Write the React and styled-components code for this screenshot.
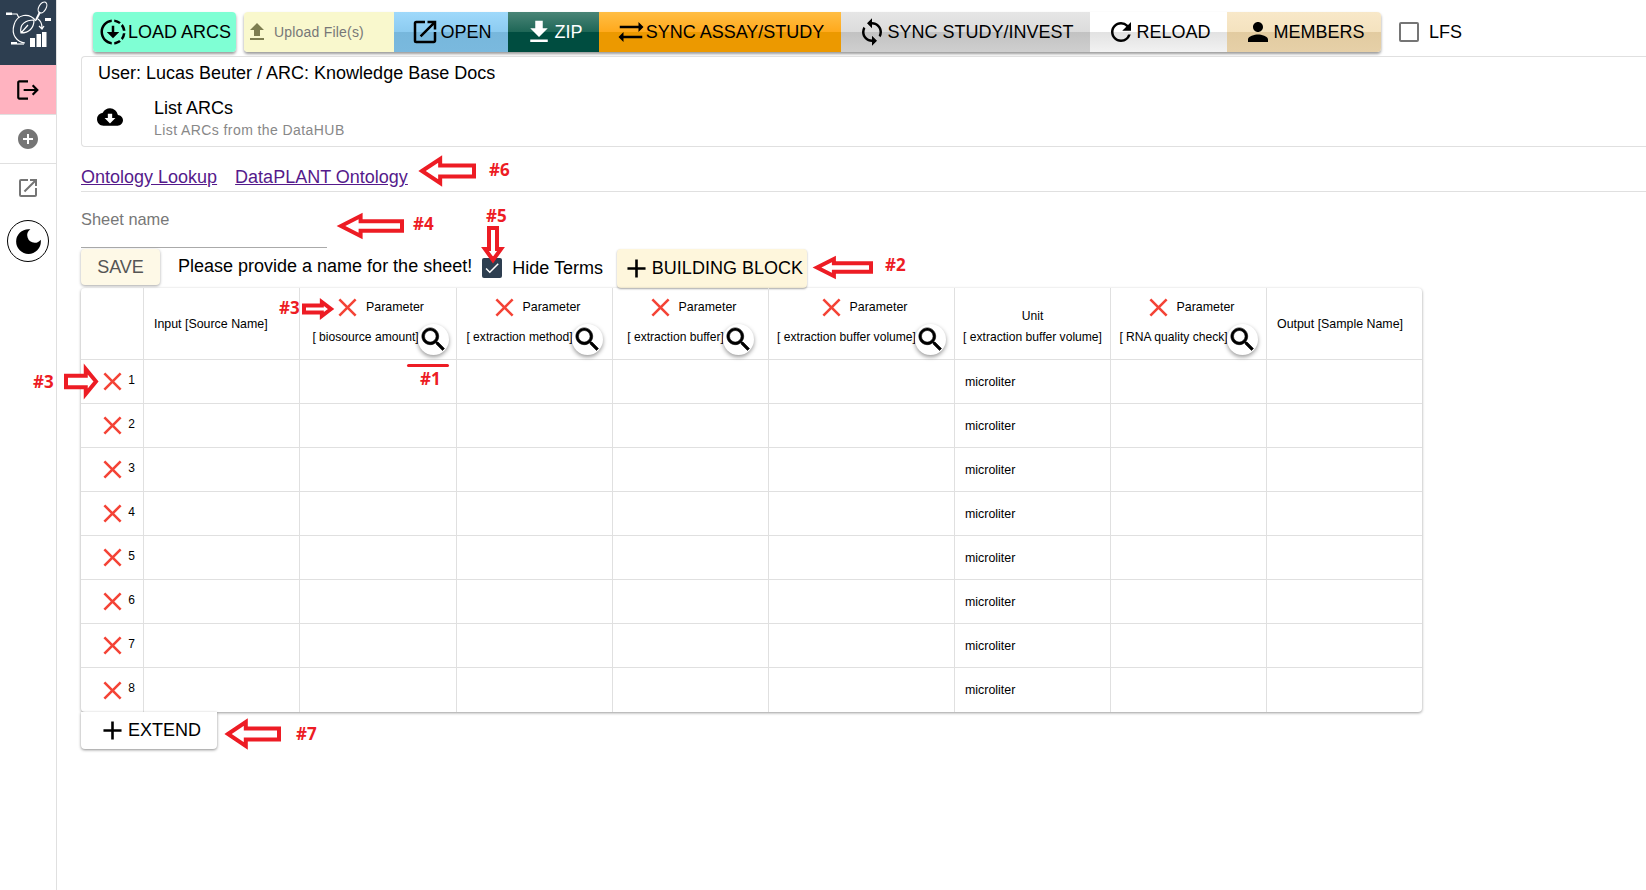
import React from "react";
import styled, { createGlobalStyle } from "styled-components";
import {
  MdAdd,
  MdAddCircle,
  MdCheck,
  MdClose,
  MdCloudDownload,
  MdDarkMode,
  MdDownloading,
  MdFileDownload,
  MdFileUpload,
  MdLogout,
  MdOpenInNew,
  MdPerson,
  MdRefresh,
  MdSync,
  MdSyncAlt,
} from "react-icons/md";

const GlobalStyle = createGlobalStyle`
  html, body {
    margin: 0;
    padding: 0;
    background: #fff;
    overflow: hidden;
  }
  body {
    font-family: "Liberation Sans", Arial, sans-serif;
    color: #000;
  }
`;

// --- page frame ---

const Page = styled.div`
  position: relative;
  display: flex;
  width: 1646px;
  height: 890px;
  overflow: hidden;
`;

const Sidebar = styled.aside`
  width: 56px;
  flex: none;
  border-right: 1px solid #e0e0e0;
  display: flex;
  flex-direction: column;
`;

const LogoBox = styled.div`
  height: 65px;
  background: #2d3e50;
`;

const SideItem = styled.div`
  height: ${(p) => p.$h}px;
  display: flex;
  align-items: center;
  justify-content: center;
  box-sizing: border-box;
  background: ${(p) => p.$bg || "transparent"};
  border-bottom: ${(p) => (p.$line ? "1px solid #e0e0e0" : "none")};
  color: ${(p) => p.$color || "#757575"};
  font-size: ${(p) => p.$size || 24}px;
`;

const MoonRing = styled.div`
  width: 40px;
  height: 40px;
  border: 1.5px solid #000;
  border-radius: 50%;
  display: flex;
  align-items: center;
  justify-content: center;
  color: #000;
  font-size: 33px;
`;

const Main = styled.main`
  flex: 1;
  min-width: 0;
  display: flex;
  flex-direction: column;
`;

// --- toolbar ---

const Toolbar = styled.div`
  height: 56px;
  box-sizing: border-box;
  padding: 12px 0 4px 36px;
  display: flex;
  align-items: stretch;
`;

const ButtonGroup = styled.div`
  display: flex;
  border-radius: 4px;
  overflow: hidden;
  box-shadow: 0 2px 3px rgba(0, 0, 0, 0.4);
  margin-right: ${(p) => p.$mr || 0}px;
`;

const ToolButton = styled.div`
  width: ${(p) => p.$w}px;
  display: flex;
  align-items: center;
  justify-content: center;
  background: ${(p) => p.$bg};
  color: ${(p) => p.$color || "#000"};
  font-size: 18px;
  line-height: 1;
  white-space: nowrap;
  svg {
    flex: none;
    font-size: ${(p) => p.$icon || 30}px;
  }
`;

const UploadButton = styled.div`
  width: 150px;
  display: flex;
  align-items: center;
  background: #f9f8cd;
  color: #777;
  font-size: 14px;
  letter-spacing: 0.2px;
  box-sizing: border-box;
  gap: 5px;
  svg {
    font-size: 24px;
    margin-left: 1px;
    color: #7d7d50;
  }
`;

const Lfs = styled.div`
  display: flex;
  align-items: center;
  margin-left: 18px;
  font-size: 18px;
  gap: 10px;
`;

const EmptyBox = styled.span`
  width: 16px;
  height: 16px;
  border: 2px solid #757575;
  border-radius: 2px;
`;

// --- arc card ---

const ArcCard = styled.section`
  margin-left: 24px;
  height: 91px;
  box-sizing: border-box;
  border: 1px solid #e0e0e0;
  border-right: none;
  border-radius: 4px 0 0 4px;
  padding: 3px 0 0 16px;
`;

const ArcTitle = styled.div`
  font-size: 18px;
  line-height: 26px;
  margin-bottom: 10px;
`;

const ArcRow = styled.div`
  display: flex;
  align-items: center;
  svg {
    font-size: 26px;
    margin-right: 31px;
    margin-left: -1px;
    margin-top: -3px;
  }
`;

const ArcName = styled.div`
  font-size: 18px;
  line-height: 25px;
`;

const ArcHint = styled.div`
  font-size: 14px;
  line-height: 19px;
  color: #888;
  letter-spacing: 0.42px;
`;

// --- links and sheet form ---

const LinkRow = styled.nav`
  margin-left: 24px;
  height: 45px;
  box-sizing: border-box;
  border-bottom: 1px solid #e0e0e0;
  display: flex;
  align-items: flex-end;
  padding-bottom: 1px;
  gap: 18px;
`;

const OntologyLink = styled.a`
  color: #551a8b;
  font-size: 18px;
  line-height: 26px;
  text-decoration: underline;
`;

const SheetName = styled.div`
  margin-left: 24px;
  width: 246px;
  height: 56px;
  box-sizing: border-box;
  border-bottom: 1px solid #aaa;
  padding-top: 17px;
  font-size: 16.4px;
  line-height: 20px;
  color: #777;
`;

const ActionRow = styled.div`
  margin-left: 24px;
  height: 40px;
  display: flex;
  align-items: center;
`;

const SaveButton = styled.div`
  width: 79px;
  height: 36px;
  margin-top: -2px;
  display: flex;
  align-items: center;
  justify-content: center;
  background: #fef9e7;
  color: #555;
  font-size: 18px;
  border-radius: 4px;
  box-shadow: 0 1px 3px rgba(0, 0, 0, 0.35);
`;

const SheetWarning = styled.span`
  margin-left: 18px;
  margin-top: -3px;
  font-size: 18px;
`;

const CheckedBox = styled.span`
  width: 20px;
  height: 20px;
  margin-left: 10px;
  margin-top: -1px;
  border-radius: 2px;
  background: #2d3e50;
  color: #fff;
  display: flex;
  align-items: center;
  justify-content: center;
  font-size: 18px;
`;

const HideTerms = styled.span`
  margin-left: 10px;
  font-size: 18px;
`;

const BlockButton = styled.div`
  margin-left: 14px;
  width: 190px;
  height: 39px;
  display: flex;
  align-items: center;
  justify-content: center;
  background: #fef6dc;
  font-size: 18px;
  border-radius: 4px;
  box-shadow: 0 1px 2px rgba(0, 0, 0, 0.35);
  svg {
    font-size: 31px;
    flex: none;
  }
`;

// --- building block table ---

const Table = styled.div`
  margin-left: 24px;
  width: 1341px;
  display: grid;
  grid-template-columns: 63px 156px 157px 156px 156px 186px 156px 156px 155px;
  grid-template-rows: 72px;
  grid-auto-rows: 44px;
  border-radius: 4px;
  box-shadow: 0 1px 3px rgba(0, 0, 0, 0.4);
  font-size: 12.4px;
`;

const Cell = styled.div`
  box-sizing: border-box;
  border-right: ${(p) => (p.$last ? "none" : "1px solid #e0e0e0")};
  border-bottom: ${(p) => (p.$bottom ? "none" : "1px solid #e0e0e0")};
  display: flex;
  align-items: center;
  padding-left: ${(p) => p.$pl || 0}px;
`;

const ParamCell = styled(Cell)`
  flex-direction: column;
  padding-top: 4px;
  white-space: nowrap;
`;

const UnitCell = styled(Cell)`
  flex-direction: column;
  justify-content: center;
  padding-top: 5px;
  gap: 7px;
  white-space: nowrap;
  font-size: 12.1px;
`;

const ParamTop = styled.div`
  display: flex;
  align-items: center;
  justify-content: center;
  height: 30px;
  gap: 3px;
`;

const ParamBottom = styled.div`
  display: flex;
  align-items: center;
  justify-content: center;
  height: 31px;
  margin-top: 2px;
  margin-left: ${(p) => p.$shift || 0}px;
  font-size: 12.1px;
`;

const ParamLabel = styled.span`
  margin-top: -5px;
`;

const DeleteIcon = styled(MdClose)`
  color: #f44336;
  font-size: 31px;
  flex: none;
`;

const SearchButton = styled.span`
  width: 31px;
  height: 31px;
  flex: none;
  border-radius: 50%;
  background: #fff;
  box-shadow: 0 2px 4px rgba(0, 0, 0, 0.4);
  display: flex;
  align-items: center;
  justify-content: center;
  margin-left: -1px;
`;

const RowHead = styled(Cell)`
  justify-content: flex-end;
  padding-right: 8px;
`;

const RowNumber = styled.span`
  margin-top: -4px;
  font-size: 12px;
`;

const ExtendButton = styled.div`
  margin-left: 24px;
  width: 136px;
  height: 37px;
  display: flex;
  align-items: center;
  justify-content: center;
  background: #fff;
  font-size: 18px;
  border-radius: 0 0 4px 4px;
  box-shadow: 0 1px 3px rgba(0, 0, 0, 0.45);
  svg {
    font-size: 31px;
    flex: none;
  }
`;

// --- red annotations lying over the screenshot ---

const Note = styled.span`
  position: absolute;
  left: ${(p) => p.$x}px;
  top: ${(p) => p.$y}px;
  color: #ed1c24;
  font-family: "Open Sans", sans-serif;
  font-weight: 700;
  font-size: 17px;
  line-height: 20px;
`;

const ArrowSvg = styled.svg`
  position: absolute;
  left: ${(p) => p.$x}px;
  top: ${(p) => p.$y}px;
  overflow: visible;
`;

const Underline = styled.div`
  position: absolute;
  left: 407px;
  top: 364px;
  width: 42px;
  height: 3px;
  border-radius: 2px;
  background: #ed1c24;
`;

function Arrow({ x, y, w, h, dir = "left" }) {
  // drawn pointing left in a w x h box, mirrored or turned for the other ways
  const head = Math.min(w * 0.36, h * 0.9);
  const a = h * 0.3;
  const b = h * 0.7;
  const d = `M2 ${h / 2} L${head} 2 L${head} ${a} L${w - 2} ${a} L${w - 2} ${b} L${head} ${b} L${head} ${h - 2} Z`;
  const turn =
    dir === "right"
      ? `rotate(180 ${w / 2} ${h / 2})`
      : dir === "down"
      ? `translate(${h} 0) rotate(90) translate(${w} 0) scale(-1 1)`
      : undefined;
  const box = dir === "down" ? { width: h, height: w } : { width: w, height: h };
  return (
    <ArrowSvg $x={x} $y={y} {...box}>
      <path d={d} transform={turn} fill="#fff" stroke="#ed1c24" strokeWidth="4" strokeLinejoin="miter" />
    </ArrowSvg>
  );
}

function Logo() {
  return (
    <svg width="56" height="65" viewBox="0 0 56 65" fill="none" stroke="#fff" strokeWidth="1.2">
      <path d="M36 21 C29 12 17 14 14 25 C11 35 17 42 25 43" />
      <path d="M36 20 L40 12" strokeWidth="2" />
      <ellipse cx="42.5" cy="7.5" rx="3.6" ry="6" transform="rotate(30 42.5 7.5)" />
      <path d="M21 33 C19 24 26 20 34 20 C34 28 29 33 21 33 Z M21 33 L28 25" />
      <path d="M11 14 L17 14 L19 18" />
      <path d="M17 44 L24 44" />
      <path d="M38 19 C41 21 42 24 42 28 M39 26 L42 29 L44 26" />
      <g fill="#fff" stroke="none">
        <rect x="6" y="12.5" width="6" height="2.5" />
        <rect x="11" y="42" width="6" height="2.5" />
        <rect x="45" y="18" width="6" height="3" />
        <rect x="30" y="38" width="5" height="9" />
        <rect x="36.5" y="34" width="4.5" height="13" />
        <rect x="42" y="32" width="4.5" height="15" />
      </g>
    </svg>
  );
}

// material search glyph, with a thin stroke because the reference draws it heavier
function SearchGlyph() {
  return (
    <svg width="31" height="31" viewBox="0 0 24 24" stroke="#000" strokeWidth="0.5">
      <path d="M15.5 14h-.79l-.28-.27C15.41 12.59 16 11.11 16 9.5 16 5.91 13.09 3 9.5 3S3 5.91 3 9.5 5.91 16 9.5 16c1.61 0 3.09-.59 4.23-1.57l.27.28v.79l5 4.99L20.49 19l-4.99-5zm-6 0C7.01 14 5 11.99 5 9.5S7.01 5 9.5 5 14 7.01 14 9.5 11.99 14 9.5 14z" />
    </svg>
  );
}

function ParamHeader({ name, shift }) {
  return (
    <ParamCell>
      <ParamTop>
        <DeleteIcon />
        <span>Parameter</span>
      </ParamTop>
      <ParamBottom $shift={shift}>
        <ParamLabel>[ {name}]</ParamLabel>
        <SearchButton>
          <SearchGlyph />
        </SearchButton>
      </ParamBottom>
    </ParamCell>
  );
}

const ROWS = [1, 2, 3, 4, 5, 6, 7, 8];

function App() {
  return (
    <Page>
      <GlobalStyle />
      <Sidebar>
        <LogoBox>
          <Logo />
        </LogoBox>
        <SideItem $h={50} $bg="#ffb3c0" $color="#000" $size={26} $line>
          <MdLogout />
        </SideItem>
        <SideItem $h={49} $line $size={24}>
          <MdAddCircle />
        </SideItem>
        <SideItem $h={48} $size={24}>
          <MdOpenInNew />
        </SideItem>
        <SideItem $h={58}>
          <MoonRing>
            <MdDarkMode />
          </MoonRing>
        </SideItem>
      </Sidebar>

      <Main>
        <Toolbar>
          <ButtonGroup $mr={8}>
            <ToolButton $w={143} $bg="#7fffd4">
              <MdDownloading />
              LOAD ARCS
            </ToolButton>
          </ButtonGroup>
          <ButtonGroup>
            <UploadButton>
              <MdFileUpload />
              Upload File(s)
            </UploadButton>
            <ToolButton $w={114} $bg="linear-gradient(#9fd9fb 0%, #8ccbf0 50%, #77b7dc 50%, #7ab9de 100%)">
              <MdOpenInNew />
              OPEN
            </ToolButton>
            <ToolButton $w={91} $color="#fff" $bg="linear-gradient(#4a8577 0%, #1e6656 50%, #004d40 50%, #004d40 100%)">
              <MdFileDownload />
              ZIP
            </ToolButton>
            <ToolButton $w={242} $bg="linear-gradient(#ffbe45 0%, #ffa91c 50%, #ec9900 50%, #ec9900 100%)">
              <MdSyncAlt />
              SYNC ASSAY/STUDY
            </ToolButton>
            <ToolButton $w={249} $bg="linear-gradient(#e6e6e6 0%, #dcdcdc 50%, #c2c2c2 50%, #cfcfcf 100%)">
              <MdSync />
              SYNC STUDY/INVEST
            </ToolButton>
            <ToolButton $w={137} $bg="linear-gradient(#fff 0%, #fff 50%, #e2e2e2 50%, #f2f2f2 100%)">
              <MdRefresh />
              RELOAD
            </ToolButton>
            <ToolButton $w={154} $bg="linear-gradient(#f8e8c9 0%, #f4e2bf 50%, #e2cba0 50%, #e6d0a8 100%)">
              <MdPerson />
              MEMBERS
            </ToolButton>
          </ButtonGroup>
          <Lfs>
            <EmptyBox />
            LFS
          </Lfs>
        </Toolbar>

        <ArcCard>
          <ArcTitle>User: Lucas Beuter / ARC: Knowledge Base Docs</ArcTitle>
          <ArcRow>
            <MdCloudDownload />
            <div>
              <ArcName>List ARCs</ArcName>
              <ArcHint>List ARCs from the DataHUB</ArcHint>
            </div>
          </ArcRow>
        </ArcCard>

        <LinkRow>
          <OntologyLink>Ontology Lookup</OntologyLink>
          <OntologyLink>DataPLANT Ontology</OntologyLink>
        </LinkRow>

        <SheetName>Sheet name</SheetName>

        <ActionRow>
          <SaveButton>SAVE</SaveButton>
          <SheetWarning>Please provide a name for the sheet!</SheetWarning>
          <CheckedBox>
            <MdCheck />
          </CheckedBox>
          <HideTerms>Hide Terms</HideTerms>
          <BlockButton>
            <MdAdd />
            BUILDING BLOCK
          </BlockButton>
        </ActionRow>

        <Table>
          <Cell />
          <Cell $pl={10}>Input [Source Name]</Cell>
          <ParamHeader name="biosource amount" shift={5} />
          <ParamHeader name="extraction method" />
          <ParamHeader name="extraction buffer" />
          <ParamHeader name="extraction buffer volume" />
          <UnitCell>
            <span>Unit</span>
            <span>[ extraction buffer volume]</span>
          </UnitCell>
          <ParamHeader name="RNA quality check" />
          <Cell $last $pl={10}>Output [Sample Name]</Cell>

          {ROWS.map((n) => {
            const bottom = n === ROWS.length;
            return (
              <React.Fragment key={n}>
                <RowHead $bottom={bottom}>
                  <DeleteIcon />
                  <RowNumber>{n}</RowNumber>
                </RowHead>
                <Cell $bottom={bottom} />
                <Cell $bottom={bottom} />
                <Cell $bottom={bottom} />
                <Cell $bottom={bottom} />
                <Cell $bottom={bottom} />
                <Cell $bottom={bottom} $pl={10}>microliter</Cell>
                <Cell $bottom={bottom} />
                <Cell $bottom={bottom} $last />
              </React.Fragment>
            );
          })}
        </Table>

        <ExtendButton>
          <MdAdd />
          EXTEND
        </ExtendButton>
      </Main>

      <Arrow x={420} y={157} w={56} h={28} />
      <Note $x={489} $y={160}>#6</Note>
      <Arrow x={339} y={214} w={65} h={24} />
      <Note $x={413} $y={214}>#4</Note>
      <Note $x={486} $y={206}>#5</Note>
      <Arrow x={483} y={226} w={36} h={20} dir="down" />
      <Arrow x={815} y={257} w={58} h={21} />
      <Note $x={885} $y={255}>#2</Note>
      <Note $x={279} $y={298}>#3</Note>
      <Arrow x={302} y={300} w={31} h={18} dir="right" />
      <Note $x={33} $y={372}>#3</Note>
      <Arrow x={64} y={367} w={34} h={29} dir="right" />
      <Underline />
      <Note $x={420} $y={369}>#1</Note>
      <Arrow x={226} y={720} w={55} h={28} />
      <Note $x={296} $y={724}>#7</Note>
    </Page>
  );
}

export default App;
